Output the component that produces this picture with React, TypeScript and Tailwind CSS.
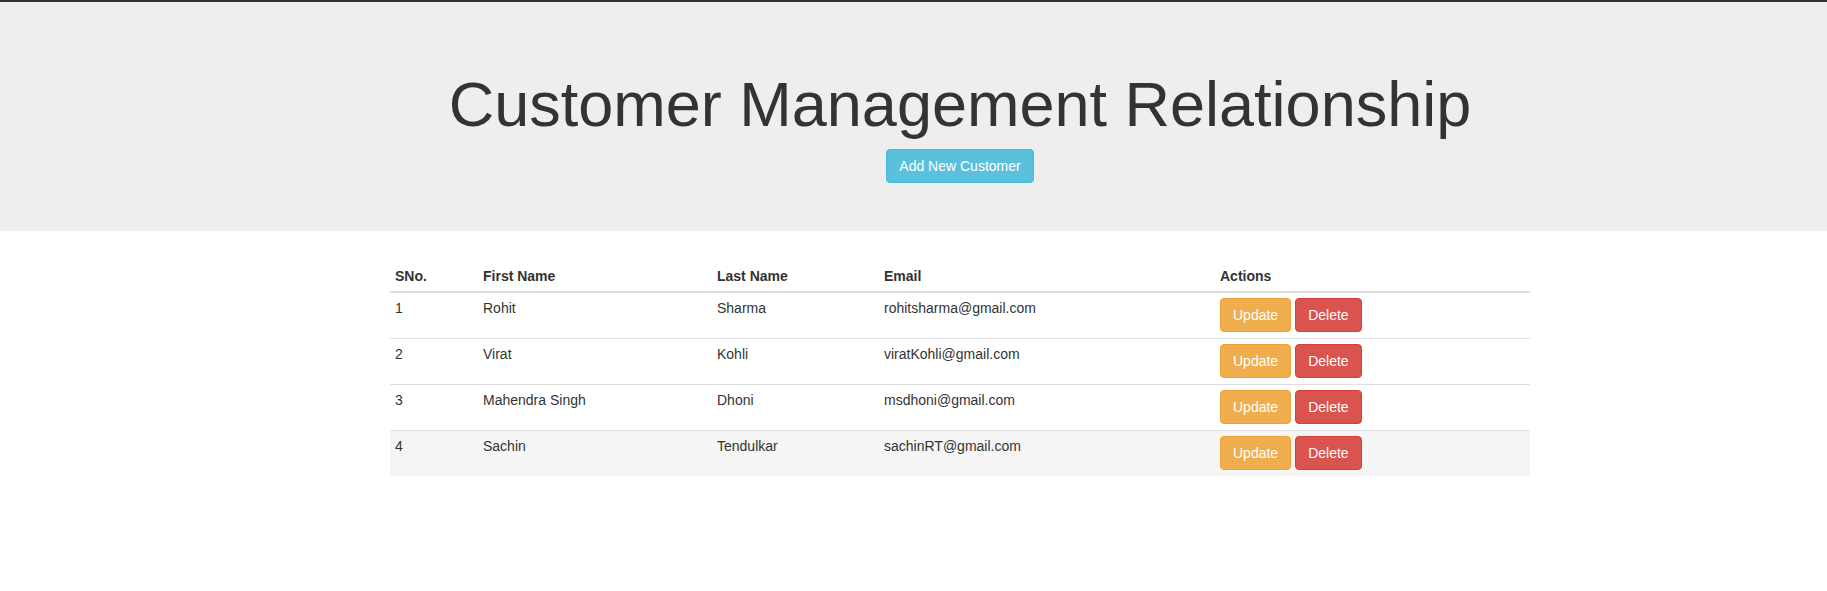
import React from "react";

const customers = [
  { id: 1, first: "Rohit", last: "Sharma", email: "rohitsharma@gmail.com" },
  { id: 2, first: "Virat", last: "Kohli", email: "viratKohli@gmail.com" },
  { id: 3, first: "Mahendra Singh", last: "Dhoni", email: "msdhoni@gmail.com" },
  { id: 4, first: "Sachin", last: "Tendulkar", email: "sachinRT@gmail.com" },
];

export default function App() {
  return (
    <div className="min-h-[591px] overflow-hidden bg-white font-['Liberation_Sans',Arial,sans-serif] text-[14px] leading-[20px] text-[#333]">
      <div className="w-[1920px]">
        {/* top bar */}
        <div className="h-[2px] bg-[#30323d]" />

        {/* jumbotron */}
        <div className="mb-[30px] bg-[#eeeeee] pt-[48px] pb-[48px]">
          <div className="mx-auto w-[1170px] px-[15px] text-center">
            <h1 className="mt-[20px] mb-[10px] text-[63px] leading-[1.1] font-normal text-[#333]">
              Customer Management Relationship
            </h1>
            <button className="rounded-[4px] border border-[#46b8da] bg-[#5bc0de] px-[12px] py-[6px] text-[14px] leading-[20px] text-white">
              Add New Customer
            </button>
          </div>
        </div>

        {/* table */}
        <div className="mx-auto w-[1170px] px-[15px]">
          <table className="w-full table-fixed border-collapse">
            <thead>
              <tr>
                <th className="w-[88px] border-b-2 border-[#ddd] p-[5px] text-left align-bottom font-bold">SNo.</th>
                <th className="w-[234px] border-b-2 border-[#ddd] p-[5px] text-left align-bottom font-bold">First Name</th>
                <th className="w-[167px] border-b-2 border-[#ddd] p-[5px] text-left align-bottom font-bold">Last Name</th>
                <th className="w-[336px] border-b-2 border-[#ddd] p-[5px] text-left align-bottom font-bold">Email</th>
                <th className="border-b-2 border-[#ddd] p-[5px] text-left align-bottom font-bold">Actions</th>
              </tr>
            </thead>
            <tbody>
              {customers.map((c) => (
                <tr key={c.id} className={c.id === 4 ? "bg-[#f5f5f5]" : ""}>
                  <td className="border-t border-[#ddd] p-[5px] align-top">{c.id}</td>
                  <td className="border-t border-[#ddd] p-[5px] align-top">{c.first}</td>
                  <td className="border-t border-[#ddd] p-[5px] align-top">{c.last}</td>
                  <td className="border-t border-[#ddd] p-[5px] align-top">{c.email}</td>
                  <td className="border-t border-[#ddd] p-[5px] align-top">
                    <div className="flex h-[35px] items-start gap-[4px]">
                      <button className="rounded-[4px] border border-[#eea236] bg-[#f0ad4e] px-[12px] py-[6px] leading-[20px] text-white">
                        Update
                      </button>
                      <button className="rounded-[4px] border border-[#d43f3a] bg-[#d9534f] px-[12px] py-[6px] leading-[20px] text-white">
                        Delete
                      </button>
                    </div>
                  </td>
                </tr>
              ))}
            </tbody>
          </table>
        </div>
      </div>
    </div>
  );
}
